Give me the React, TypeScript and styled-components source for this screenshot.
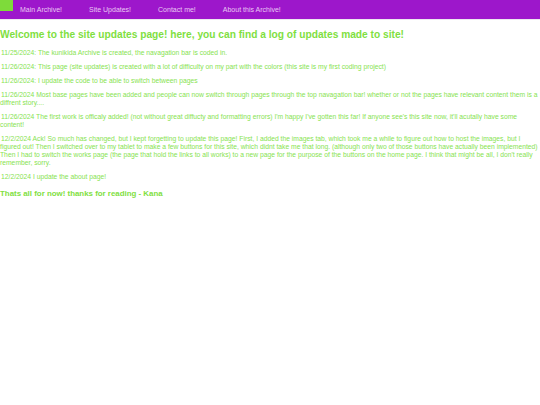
import React from 'react'
import styled, { createGlobalStyle } from 'styled-components'

const Global = createGlobalStyle`
    body {
        margin: 0;
        background: #ffffff;
        font-family: "Liberation Sans", Arial, sans-serif;
    }
`

const Nav = styled.nav`
    display: flex;
    align-items: flex-start;
    height: 19px;
    background-color: #9d17cb;
    border-bottom: 1px solid #ece7ef;
`

const Logo = styled.div`
    width: 13px;
    height: 11px;
    background-color: #7edb3a;
`

const Links = styled.ul`
    display: flex;
    gap: 27px;
    list-style: none;
    margin: 0;
    padding: 0 0 0 7px;
    height: 19px;
    align-items: center;
`

const Link = styled.li`
    font-size: 7px;
    color: #e9c8f3;
`

const Main = styled.main`
    padding: 9px 0 0;
    color: #8ce65a;
`

const Title = styled.h1`
    margin: 0 0 9px;
    font-size: 10.2px;
    font-weight: bold;
    color: #7fe03f;
`

const Entry = styled.p`
    margin: 0 0 6px;
    text-indent: 1px;
    font-size: 6.75px;
    line-height: 8px;
    color: #87e350;
`

const SignOff = styled.h3`
    margin: 8px 0 0;
    font-size: 7.9px;
    font-weight: bold;
    color: #7fe03f;
`

const entries = [
    '11/25/2024: The kunikida Archive is created, the navagation bar is coded in.',
    '11/26/2024: This page (site updates) is created with a lot of difficulty on my part with the colors (this site is my first coding project)',
    '11/26/2024: I update the code to be able to switch between pages',
    "11/26/2024 Most base pages have been added and people can now switch through pages through the top navagation bar! whether or not the pages have relevant content them is a diffrent story....",
    "11/26/2024 The first work is officaly added! (not without great diffucty and formatting errors) I'm happy I've gotten this far! If anyone see's this site now, it'll acutally have some content!",
    "12/2/2024 Ack! So much has changed, but I kept forgetting to update this page! First, I added the images tab, which took me a while to figure out how to host the images, but I figured out! Then I switched over to my tablet to make a few buttons for this site, which didnt take me that long. (although only two of those buttons have actually been implemented) Then I had to switch the works page (the page that hold the links to all works) to a new page for the purpose of the buttons on the home page. I think that might be all, I don't really remember, sorry.",
    '12/2/2024 I update the about page!',
]

const App = () => {
  return (
    <>
        <Global />
        <Nav>
            <Logo />
            <Links>
                <Link>Main Archive!</Link>
                <Link>Site Updates!</Link>
                <Link>Contact me!</Link>
                <Link>About this Archive!</Link>
            </Links>
        </Nav>
        <Main>
            <Title>Welcome to the site updates page! here, you can find a log of updates made to site!</Title>
            {entries.map((text) => (
                <Entry key={text}>{text}</Entry>
            ))}
            <SignOff>Thats all for now! thanks for reading - Kana</SignOff>
        </Main>
    </>
  )
}

export default App
